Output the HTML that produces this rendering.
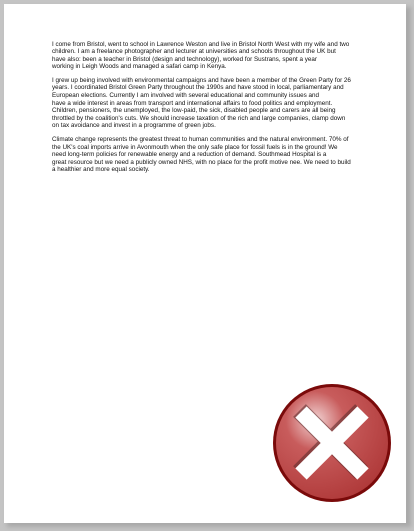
<!DOCTYPE html>
<html><head><meta charset="utf-8"><style>
html,body{margin:0;padding:0;}
body{width:414px;height:531px;background:#c4c4c4;position:relative;overflow:hidden;font-family:"Liberation Sans",sans-serif;}
.shadow{position:absolute;left:7px;top:7px;width:404px;height:520px;background:#a9a9a9;filter:blur(2px);}
.page{position:absolute;left:4px;top:4px;width:402px;height:519px;background:#fff;}
.txt{position:absolute;left:52px;top:40.5px;font-size:6.3px;line-height:7.6px;color:#111;white-space:nowrap;}
.txt p{margin:0 0 6px 0;}
svg{position:absolute;left:270px;top:381px;}
</style></head><body>
<div class="shadow"></div>
<div class="page"></div>
<div class="txt">
<p>I come from Bristol, went to school in Lawrence Weston and live in Bristol North West with my wife and two<br>children. I am a freelance photographer and lecturer at universities and schools throughout the UK but<br>have also: been a teacher in Bristol (design and technology), worked for Sustrans, spent a year<br>working in Leigh Woods and managed a safari camp in Kenya.</p>
<p>I grew up being involved with environmental campaigns and have been a member of the Green Party for 26<br>years. I coordinated Bristol Green Party throughout the 1990s and have stood in local, parliamentary and<br>European elections. Currently I am involved with several educational and community issues and<br>have a wide interest in areas from transport and international affairs to food politics and employment.<br>Children, pensioners, the unemployed, the low-paid, the sick, disabled people and carers are all being<br>throttled by the coalition's cuts. We should increase taxation of the rich and large companies, clamp down<br>on tax avoidance and invest in a programme of green jobs.</p>
<p>Climate change represents the greatest threat to human communities and the natural environment. 70% of<br>the UK's coal imports arrive in Avonmouth when the only safe place for fossil fuels is in the ground! We<br>need long-term policies for renewable energy and a reduction of demand. Southmead Hospital is a<br>great resource but we need a publicly owned NHS, with no place for the profit motive nee. We need to build<br>a healthier and more equal society.</p>
</div>
<svg width="124" height="124" viewBox="0 0 124 124">
<defs>
<radialGradient id="g" cx="0.35" cy="0.3" r="0.75">
<stop offset="0" stop-color="#f3d6d6"/>
<stop offset="0.35" stop-color="#c85c5c"/>
<stop offset="1" stop-color="#b03a3a"/>
</radialGradient>
</defs>
<circle cx="62" cy="62" r="59" fill="#7a0a0a"/>
<circle cx="62" cy="62" r="56" fill="url(#g)"/>
<g stroke="#5a2a2a" stroke-width="18" stroke-linecap="butt" opacity="0.55" transform="translate(-1.5,-1.5)">
<line x1="31" y1="31" x2="93" y2="93"/><line x1="93" y1="31" x2="31" y2="93"/>
</g>
<g stroke="#fff" stroke-width="16" stroke-linecap="butt">
<line x1="31" y1="31" x2="93" y2="93"/><line x1="93" y1="31" x2="31" y2="93"/>
</g>
</svg>
</body></html>
